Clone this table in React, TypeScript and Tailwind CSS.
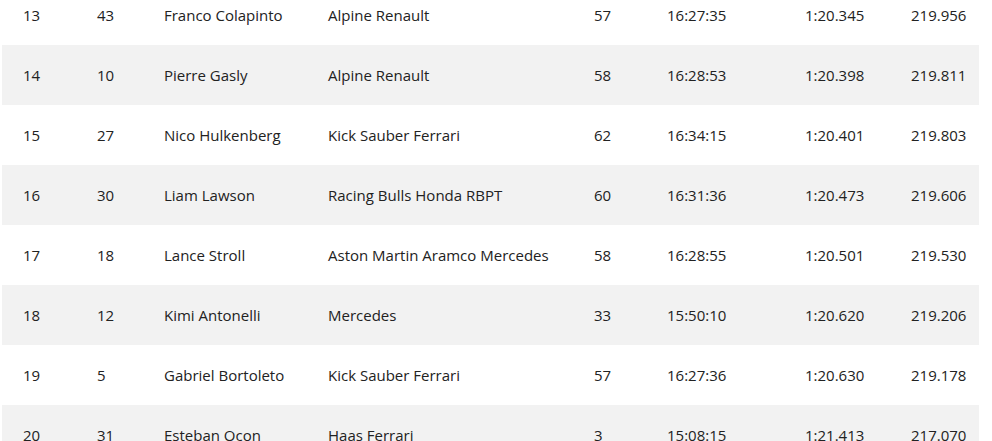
import React from 'react';

interface Result {
  pos: number;
  no: number;
  driver: string;
  car: string;
  laps: number;
  time: string;
  best: string;
  speed: string;
}

const results: Result[] = [
  { pos: 13, no: 43, driver: 'Franco Colapinto', car: 'Alpine Renault', laps: 57, time: '16:27:35', best: '1:20.345', speed: '219.956' },
  { pos: 14, no: 10, driver: 'Pierre Gasly', car: 'Alpine Renault', laps: 58, time: '16:28:53', best: '1:20.398', speed: '219.811' },
  { pos: 15, no: 27, driver: 'Nico Hulkenberg', car: 'Kick Sauber Ferrari', laps: 62, time: '16:34:15', best: '1:20.401', speed: '219.803' },
  { pos: 16, no: 30, driver: 'Liam Lawson', car: 'Racing Bulls Honda RBPT', laps: 60, time: '16:31:36', best: '1:20.473', speed: '219.606' },
  { pos: 17, no: 18, driver: 'Lance Stroll', car: 'Aston Martin Aramco Mercedes', laps: 58, time: '16:28:55', best: '1:20.501', speed: '219.530' },
  { pos: 18, no: 12, driver: 'Kimi Antonelli', car: 'Mercedes', laps: 33, time: '15:50:10', best: '1:20.620', speed: '219.206' },
  { pos: 19, no: 5, driver: 'Gabriel Bortoleto', car: 'Kick Sauber Ferrari', laps: 57, time: '16:27:36', best: '1:20.630', speed: '219.178' },
  { pos: 20, no: 31, driver: 'Esteban Ocon', car: 'Haas Ferrari', laps: 3, time: '15:08:15', best: '1:21.413', speed: '217.070' },
];

export default function App() {
  return (
    <div className="w-[992px] h-[441px] overflow-hidden bg-white">
      <div
        className="ml-[2px] w-[977px] -mt-[15px] text-[15px] text-[#222222]"
        style={{ fontFamily: '"Open Sans", "Noto Sans", sans-serif' }}
      >
        {results.map((r, i) => (
          <div
            key={r.pos}
            className={`grid grid-cols-[74px_67px_164px_266px_73px_138px_106px_89px] h-[60px] items-center ${
              i % 2 === 1 ? 'bg-[#f2f2f2]' : 'bg-white'
            }`}
          >
            <span className="pl-[21px]">{r.pos}</span>
            <span className="pl-[21px]">{r.no}</span>
            <span className="pl-[21px] whitespace-nowrap">{r.driver}</span>
            <span className="pl-[21px] whitespace-nowrap">{r.car}</span>
            <span className="pl-[21px]">{r.laps}</span>
            <span className="pl-[21px]">{r.time}</span>
            <span className="pl-[21px]">{r.best}</span>
            <span className="pl-[21px]">{r.speed}</span>
          </div>
        ))}
      </div>
    </div>
  );
}
